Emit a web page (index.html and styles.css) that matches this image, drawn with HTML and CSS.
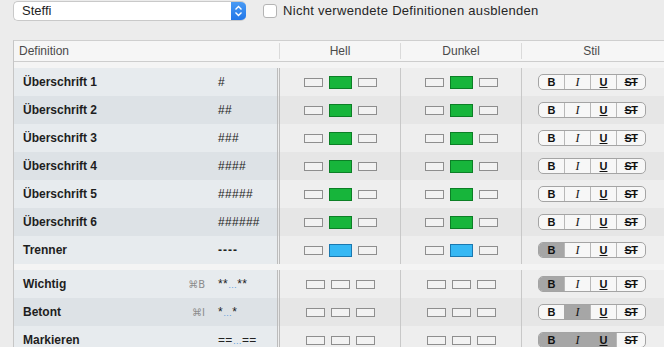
FILE: index.html
```html
<!DOCTYPE html>
<html lang="de">
  <head>
    <meta charset="UTF-8" />
    <title>Stile</title>
    <link rel="stylesheet" href="styles.css">
  </head>
  <body>
    <div class="toolbar">
      <div class="popup">
        <span class="popup-label">Steffi</span>
        <span class="popup-arrows">
          <svg width="15" height="20" viewBox="0 0 15 20">
            <path d="M4.5 8.5 L7.5 5.5 L10.5 8.5" fill="none" stroke="#fff" stroke-width="1.4"/>
            <path d="M4.5 11.5 L7.5 14.5 L10.5 11.5" fill="none" stroke="#fff" stroke-width="1.4"/>
          </svg>
        </span>
      </div>
      <label class="check"><span class="check-box"></span>Nicht verwendete Definitionen ausblenden</label>
    </div>

    <div class="table">
      <div class="thead">
        <div class="th th-def">Definition</div>
        <div class="th">Hell</div>
        <div class="th">Dunkel</div>
        <div class="th">Stil</div>
        <div class="th th-rest"></div>
      </div>
      <div class="gap"></div>

      <!-- Überschriften -->
      <div class="row">
        <div class="cell def"><span class="name">Überschrift 1</span><span class="key"></span><span class="mark">#</span></div>
        <div class="cell hell"><span class="sw"></span><span class="sw big green"></span><span class="sw"></span></div>
        <div class="cell dunkel"><span class="sw"></span><span class="sw big green"></span><span class="sw"></span></div>
        <div class="cell stil"><div class="seg"><span class="b">B</span><span class="i">I</span><span class="u">U</span><span class="st">ST</span></div></div>
        <div class="cell rest"></div>
      </div>
      <div class="row">
        <div class="cell def"><span class="name">Überschrift 2</span><span class="key"></span><span class="mark">##</span></div>
        <div class="cell hell"><span class="sw"></span><span class="sw big green"></span><span class="sw"></span></div>
        <div class="cell dunkel"><span class="sw"></span><span class="sw big green"></span><span class="sw"></span></div>
        <div class="cell stil"><div class="seg"><span class="b">B</span><span class="i">I</span><span class="u">U</span><span class="st">ST</span></div></div>
        <div class="cell rest"></div>
      </div>
      <div class="row">
        <div class="cell def"><span class="name">Überschrift 3</span><span class="key"></span><span class="mark">###</span></div>
        <div class="cell hell"><span class="sw"></span><span class="sw big green"></span><span class="sw"></span></div>
        <div class="cell dunkel"><span class="sw"></span><span class="sw big green"></span><span class="sw"></span></div>
        <div class="cell stil"><div class="seg"><span class="b">B</span><span class="i">I</span><span class="u">U</span><span class="st">ST</span></div></div>
        <div class="cell rest"></div>
      </div>
      <div class="row">
        <div class="cell def"><span class="name">Überschrift 4</span><span class="key"></span><span class="mark">####</span></div>
        <div class="cell hell"><span class="sw"></span><span class="sw big green"></span><span class="sw"></span></div>
        <div class="cell dunkel"><span class="sw"></span><span class="sw big green"></span><span class="sw"></span></div>
        <div class="cell stil"><div class="seg"><span class="b">B</span><span class="i">I</span><span class="u">U</span><span class="st">ST</span></div></div>
        <div class="cell rest"></div>
      </div>
      <div class="row">
        <div class="cell def"><span class="name">Überschrift 5</span><span class="key"></span><span class="mark">#####</span></div>
        <div class="cell hell"><span class="sw"></span><span class="sw big green"></span><span class="sw"></span></div>
        <div class="cell dunkel"><span class="sw"></span><span class="sw big green"></span><span class="sw"></span></div>
        <div class="cell stil"><div class="seg"><span class="b">B</span><span class="i">I</span><span class="u">U</span><span class="st">ST</span></div></div>
        <div class="cell rest"></div>
      </div>
      <div class="row">
        <div class="cell def"><span class="name">Überschrift 6</span><span class="key"></span><span class="mark">######</span></div>
        <div class="cell hell"><span class="sw"></span><span class="sw big green"></span><span class="sw"></span></div>
        <div class="cell dunkel"><span class="sw"></span><span class="sw big green"></span><span class="sw"></span></div>
        <div class="cell stil"><div class="seg"><span class="b">B</span><span class="i">I</span><span class="u">U</span><span class="st">ST</span></div></div>
        <div class="cell rest"></div>
      </div>
      <div class="row">
        <div class="cell def"><span class="name">Trenner</span><span class="key"></span><span class="mark dash">----</span></div>
        <div class="cell hell"><span class="sw"></span><span class="sw big blue"></span><span class="sw"></span></div>
        <div class="cell dunkel"><span class="sw"></span><span class="sw big blue"></span><span class="sw"></span></div>
        <div class="cell stil"><div class="seg"><span class="b on">B</span><span class="i">I</span><span class="u">U</span><span class="st">ST</span></div></div>
        <div class="cell rest"></div>
      </div>

      <div class="gap"></div>

      <!-- Auszeichnungen -->
      <div class="row">
        <div class="cell def"><span class="name">Wichtig</span><span class="key">⌘B</span><span class="mark">**<em>…</em>**</span></div>
        <div class="cell hell"><span class="sw"></span><span class="sw"></span><span class="sw"></span></div>
        <div class="cell dunkel"><span class="sw"></span><span class="sw"></span><span class="sw"></span></div>
        <div class="cell stil"><div class="seg"><span class="b on">B</span><span class="i">I</span><span class="u">U</span><span class="st">ST</span></div></div>
        <div class="cell rest"></div>
      </div>
      <div class="row">
        <div class="cell def"><span class="name">Betont</span><span class="key">⌘I</span><span class="mark">*<em>…</em>*</span></div>
        <div class="cell hell"><span class="sw"></span><span class="sw"></span><span class="sw"></span></div>
        <div class="cell dunkel"><span class="sw"></span><span class="sw"></span><span class="sw"></span></div>
        <div class="cell stil"><div class="seg"><span class="b">B</span><span class="i on">I</span><span class="u">U</span><span class="st">ST</span></div></div>
        <div class="cell rest"></div>
      </div>
      <div class="row">
        <div class="cell def"><span class="name">Markieren</span><span class="key"></span><span class="mark">==<em>…</em>==</span></div>
        <div class="cell hell"><span class="sw"></span><span class="sw"></span><span class="sw"></span></div>
        <div class="cell dunkel"><span class="sw"></span><span class="sw"></span><span class="sw"></span></div>
        <div class="cell stil"><div class="seg"><span class="b on">B</span><span class="i on">I</span><span class="u on">U</span><span class="st">ST</span></div></div>
        <div class="cell rest"></div>
      </div>
    </div>
  </body>
</html>
```

FILE: styles.css
```css
body {
  margin: 0;
  background: #ececec;
  font-family: "Liberation Sans", Arial, sans-serif;
  color: #1e1e1e;
  overflow: hidden;
}

/* ----------- barre du haut ----------- */
.toolbar {
  display: flex;
  align-items: center;
  height: 21px;
  padding: 0 0 0 13px;
}
.popup {
  display: flex;
  width: 233px;
  height: 20px;
  box-sizing: border-box;
  background: #fff;
  border: 1px solid #c9c9c9;
  border-right: none;
  border-radius: 5px;
  overflow: hidden;
}
.popup-label {
  flex-grow: 1;
  padding-left: 8px;
  font-size: 13px;
  line-height: 18px;
}
.popup-arrows {
  width: 15px;
  height: 20px;
  margin-top: -1px;
  background: linear-gradient(#4a9cf5, #1f75e8);
}
.popup-arrows svg {
  display: block;
}
.check {
  display: flex;
  align-items: center;
  margin-left: 17px;
  font-size: 13px;
  letter-spacing: 0.3px;
  color: #262626;
}
.check-box {
  width: 12px;
  height: 12px;
  margin-right: 6px;
  background: #fff;
  border: 1px solid #b4b4b4;
  border-radius: 3px;
}

/* ----------- tableau ----------- */
.table {
  margin: 19px 0 0 13px;
  width: 700px;
  border-left: 1px solid #c6c6c6;
  border-top: 1px solid #cfcfcf;
}
.thead {
  display: grid;
  grid-template-columns: 265px 121px 121px 140px 1fr;
  height: 20px;
  background: #f6f6f6;
  border-bottom: 1px solid #cdcdcd;
}
.th {
  font-size: 12px;
  color: #4a4a4a;
  text-align: center;
  border-left: 1px solid #dadada;
  margin: 2px 0;
  line-height: 16px;
}
.th-def {
  text-align: left;
  padding-left: 5px;
  border-left: none;
}
.th-rest {
  border-left: none;
}
.gap {
  height: 6px;
  background: #f4f4f4;
}

.row {
  display: grid;
  grid-template-columns: 263px 124px 121px 140px 1fr;
  height: 28px;
}
.cell {
  display: flex;
  align-items: center;
  justify-content: center;
  background: #eeeeee;
}
.row:nth-of-type(even) .cell {
  background: #e6e6e6;
}
.cell.def {
  justify-content: flex-start;
  padding-left: 9px;
  background: #e7ebee;
  font-size: 12px;
}
.row:nth-of-type(even) .cell.def {
  background: #dde2e6;
}
.cell.hell {
  border-left: 3px double #bcbcbc;
  border-right: 1px solid #c8c8c8;
}
.cell.dunkel {
  border-right: 1px solid #c8c8c8;
}

.name {
  flex-grow: 1;
  font-weight: bold;
}
.key {
  color: #8c8c8c;
  font-family: "DejaVu Sans", "Liberation Sans", sans-serif;
  font-size: 10px;
}
.mark {
  width: 59px;
  margin-left: 13px;
  color: #222;
  letter-spacing: 0.3px;
}
.mark em {
  font-style: normal;
  color: #5f9fdb;
  font-size: 9px;
}
.mark.dash {
  font-weight: bold;
  letter-spacing: 1px;
}

/* pastilles de couleur */
.sw {
  width: 19px;
  height: 9px;
  box-sizing: border-box;
  margin: 0 3px;
  background: #f2f2f2;
  border: 1px solid #8e8e8e;
}
.sw.big {
  width: 23px;
  height: 13px;
}
.sw.green {
  background: #17b53b;
  border-color: #0c7f26;
}
.sw.blue {
  background: #36b8f4;
  border-color: #1a78b0;
}

/* boutons de style */
.seg {
  display: flex;
  height: 16px;
  box-sizing: border-box;
  border: 1px solid #a4a4a4;
  border-radius: 5px;
  background: #f7f7f7;
  overflow: hidden;
}
.seg span {
  width: 25px;
  font-size: 11px;
  line-height: 14px;
  text-align: center;
  border-left: 1px solid #b8b8b8;
  color: #111;
}
.seg span:first-child {
  border-left: none;
}
.seg .b {
  font-weight: bold;
}
.seg .i {
  font-family: "Liberation Serif", serif;
  font-style: italic;
  font-size: 12px;
}
.seg .u {
  text-decoration: underline;
  font-weight: bold;
}
.seg .st {
  width: 28px;
  text-decoration: line-through;
  letter-spacing: -0.5px;
  font-weight: bold;
}
.seg span.on {
  background: #a6a6a6;
  border-left-color: #a6a6a6;
}
```
